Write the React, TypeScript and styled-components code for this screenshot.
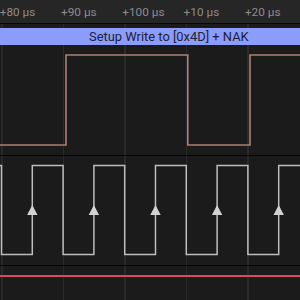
import React from "react";
import styled, { createGlobalStyle } from "styled-components";

const Global = createGlobalStyle`
  html, body { margin: 0; padding: 0; background: #1c1c1c; }
  body { font-family: Roboto, "Liberation Sans", sans-serif; }
`;

const STEP = 61.6;
const OFFSET = 1.5;

const Screen = styled.div`
  width: 300px;
  height: 300px;
  overflow: hidden;
  display: flex;
  flex-direction: column;
  background-color: #1b1b1b;
  background-image: repeating-linear-gradient(
    to right,
    transparent 0px,
    transparent ${OFFSET - 0.5}px,
    #2a2a2a ${OFFSET - 0.5}px,
    #2a2a2a ${OFFSET + 1}px,
    transparent ${OFFSET + 1}px,
    transparent ${STEP}px
  );
`;

const Ruler = styled.div`
  height: 23px;
  flex: none;
  background: #262626;
  display: flex;
  align-items: center;
  border-bottom: 1px solid #070707;
`;

const Tick = styled.span`
  width: ${STEP}px;
  flex: none;
  font-size: 11.8px;
  color: #8c8c8c;
  margin-top: 1px;
  margin-left: -0.3px;
`;

const Gap = styled.div<{ $h: number }>`
  height: ${(p) => p.$h}px;
  flex: none;
`;

const Frame = styled.div`
  height: 17px;
  flex: none;
  background: #8c9cfb;
  display: flex;
  align-items: center;
  padding-left: 89px;
  font-size: 12.9px;
  color: #1d2238;
`;

const Lane = styled.div<{ $h: number }>`
  height: ${(p) => p.$h}px;
  flex: none;
  border-bottom: 1px solid #060606;
`;

const Wave = styled.svg`
  display: block;
  width: 300px;
  height: 100%;
`;

const BottomLane = styled.div`
  flex: 1;
  padding-top: 9px;
`;

const RedLine = styled.div`
  height: 2px;
  background: #d84a5c;
`;

const ticks = ["+80 µs", "+90 µs", "+100 µs", "+10 µs", "+20 µs"];

function clockPath() {
  const hi = 9;
  const lo = 98;
  let d = `M -5 ${hi}`;
  for (let k = 0; k < 5; k++) {
    const fall = OFFSET + STEP * k;
    const rise = 32.3 + STEP * k;
    d += ` H ${fall.toFixed(1)} V ${lo} H ${rise.toFixed(1)} V ${hi}`;
  }
  d += " H 305";
  return d;
}

const rises = [0, 1, 2, 3, 4].map((k) => 32.3 + STEP * k);

export default function App() {
  return (
    <>
      <Global />
      <Screen>
        <Ruler>
          {ticks.map((t) => (
            <Tick key={t}>{t}</Tick>
          ))}
        </Ruler>
        <Gap $h={4} />
        <Frame>Setup Write to [0x4D] + NAK</Frame>
        <Lane $h={110}>
          <Wave viewBox="0 0 300 110">
            <path
              d="M -5 100 H 66 V 10 H 187.8 V 100 H 250 V 10 H 305"
              fill="none"
              stroke="#a9826f"
              strokeWidth={1.6}
            />
          </Wave>
        </Lane>
        <Lane $h={109}>
          <Wave viewBox="0 0 300 108">
            <path d={clockPath()} fill="none" stroke="#bdbdbd" strokeWidth={1.5} />
            {rises.map((x) => (
              <polygon
                key={x}
                points={`${x - 5.2},58.5 ${x + 5.2},58.5 ${x},48.5`}
                fill="#d2d2d2"
              />
            ))}
          </Wave>
        </Lane>
        <BottomLane>
          <RedLine />
        </BottomLane>
      </Screen>
    </>
  );
}
